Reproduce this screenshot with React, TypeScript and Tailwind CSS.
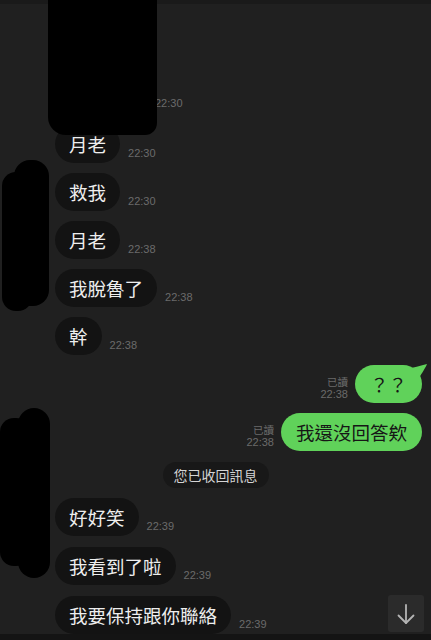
import React from "react";

const font = { fontFamily: '"Noto Sans CJK TC", "Noto Sans", sans-serif' };
const tsFont = { fontFamily: '"Liberation Sans", "Noto Sans CJK TC", sans-serif' };

function Received({ text, time, className = "" }: { text: string; time: string; className?: string }) {
  return (
    <div className={`flex items-end gap-[8px] ${className}`}>
      <div
        className="h-[38px] px-[14px] rounded-[19px] bg-[#131313] text-[#eeeeee] text-[18.5px] flex items-center leading-none whitespace-nowrap"
        style={font}
      >
        {text}
      </div>
      <div className="text-[11px] leading-[13px] text-[#6b6b6b] mb-[3px]" style={tsFont}>
        {time}
      </div>
    </div>
  );
}

function Sent({ text, time, tail = false, className = "" }: { text: string; time: string; tail?: boolean; className?: string }) {
  return (
    <div className={`flex items-end justify-end gap-[7px] ${className}`}>
      <div className="flex flex-col items-end mb-[2px] text-[11px] leading-[13px] text-[#6b6b6b]" style={tsFont}>
        <span style={font} className="text-[10.5px]">已讀</span>
        <span>{time}</span>
      </div>
      <div className="relative">
        <div
          className="relative z-10 h-[38px] px-[15px] rounded-[19px] bg-[#60d25a] text-[#161616] text-[18.5px] flex items-center leading-none whitespace-nowrap"
          style={font}
        >
          {text}
        </div>
        {tail && (
          <svg className="absolute right-[-7px] top-[-1px] z-0" width="26" height="22" viewBox="0 0 26 22">
            <path d="M2 6 C 10 3, 18 2, 24 0 C 22 5, 18 10, 14 18 Z" fill="#60d25a" />
          </svg>
        )}
      </div>
    </div>
  );
}

export default function App() {
  return (
    <div className="relative w-[431px] h-[640px] overflow-hidden bg-[#202020] flex flex-col">
      <div className="h-[4px] bg-[#1a1a1a]" />
      <div className="flex flex-col pl-[55px] pr-[9px]">
        {/* hidden first message */}
        <div className="flex items-end gap-[7px]">
          <div className="w-[93px] h-[109px]" />
          <div className="text-[11px] leading-[13px] text-[#6b6b6b] mb-[3px]" style={tsFont}>22:30</div>
        </div>
        <div className="flex flex-col gap-[10px] mt-[12px]">
          <Received text="月老" time="22:30" />
          <Received text="救我" time="22:30" />
          <Received text="月老" time="22:38" />
          <Received text="我脫魯了" time="22:38" />
          <Received text="幹" time="22:38" />
        </div>
        <Sent text="？？" time="22:38" tail className="mt-[10px]" />
        <Sent text="我還沒回答欸" time="22:38" className="mt-[10px]" />
        <div className="flex justify-center mt-[11px] pr-[46px]">
          <div
            className="h-[26px] px-[11px] rounded-[13px] bg-[#181818] text-[#d4d4d4] text-[14px] flex items-center leading-none"
            style={font}
          >
            您已收回訊息
          </div>
        </div>
        <Received text="好好笑" time="22:39" className="mt-[10px]" />
        <Received text="我看到了啦" time="22:39" className="mt-[11px]" />
        <Received text="我要保持跟你聯絡" time="22:39" className="mt-[11px]" />
      </div>
      <div className="mt-auto h-[6px] bg-[#141414]" />

      {/* redaction overlays */}
      <div className="absolute left-[48px] top-[-10px] w-[109px] h-[145px] bg-black rounded-bl-[18px] rounded-br-[12px]" />
      <div className="absolute left-[2px] top-[172px] w-[30px] h-[139px] bg-black rounded-[14px]" />
      <div className="absolute left-[14px] top-[160px] w-[35px] h-[146px] bg-black rounded-[16px]" />
      <div className="absolute left-[0px] top-[418px] w-[30px] h-[148px] bg-black rounded-[14px]" />
      <div className="absolute left-[18px] top-[408px] w-[32px] h-[170px] bg-black rounded-[16px]" />

      {/* scroll-down button */}
      <div className="absolute left-[388px] top-[595px] w-[36px] h-[37px] bg-[#2b2b2b] rounded-[3px] flex items-center justify-center">
        <svg width="22" height="24" viewBox="0 0 22 24" fill="none" stroke="#b4b4b4" strokeWidth="1.8" strokeLinecap="round" strokeLinejoin="round">
          <path d="M11 3 V21" />
          <path d="M3.5 13.5 L11 21 L18.5 13.5" />
        </svg>
      </div>
    </div>
  );
}
